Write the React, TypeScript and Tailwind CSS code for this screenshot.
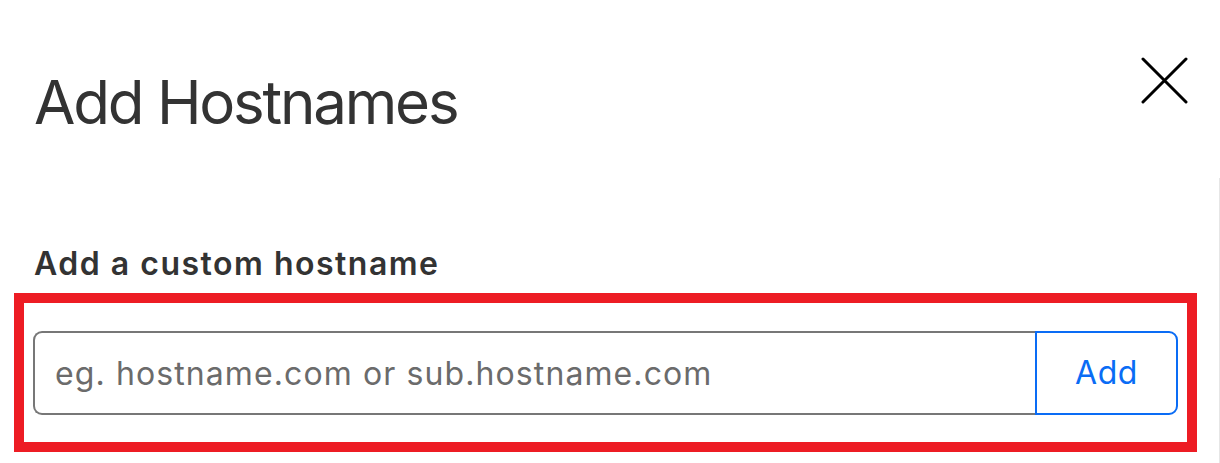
import { useState } from 'react';

export default function App() {
  const [hostname, setHostname] = useState('');

  return (
    <div className="relative h-[463px] w-[1220px] overflow-hidden bg-white font-['Inter','Noto_Sans',sans-serif]">
      {/* faint scrollbar edge on the right */}
      <div className="absolute right-0 top-[178px] bottom-0 w-px bg-[#e6e6e6]" />

      {/* Header */}
      <div className="flex items-start justify-between pl-[34px] pr-[32px] pt-[68px]">
        <h1 className="text-[60px] leading-[68px] font-normal tracking-[-2.2px] text-[#333333]">Add Hostnames</h1>
        <button aria-label="Close" className="-mt-[11px] flex h-[47px] w-[47px] items-center justify-center">
          <svg width="47" height="47" viewBox="0 0 47 47" fill="none">
            <path d="M2 2L45 45M45 2L2 45" stroke="#000" strokeWidth="3" strokeLinecap="round" />
          </svg>
        </button>
      </div>

      {/* Custom hostname */}
      <div className="mt-[109px] pl-[34px]">
        <label htmlFor="hostname" className="block text-[32px] leading-[38px] font-semibold tracking-[1.5px] text-[#333333]">
          Add a custom hostname
        </label>
      </div>

      <div className="ml-[14px] mt-[10px] w-[1183px] border-[10px] border-[#ed1c24] px-[9px] pt-[28px] pb-[27px]">
        <div className="flex h-[84px]">
          <input
            id="hostname"
            value={hostname}
            onChange={(e) => setHostname(e.target.value)}
            placeholder="eg. hostname.com or sub.hostname.com"
            className="h-full w-[1002px] rounded-l-[9px] border-2 border-r-0 border-[#777777] px-[20px] text-[32px] tracking-[1.1px] text-[#333333] outline-none placeholder:text-[#6b6b6b]"
          />
          <button className="h-full w-[143px] rounded-r-[9px] border-2 border-[#0a6cf5] text-[32px] tracking-[0.5px] text-[#0a6cf5]">
            Add
          </button>
        </div>
      </div>
    </div>
  );
}
